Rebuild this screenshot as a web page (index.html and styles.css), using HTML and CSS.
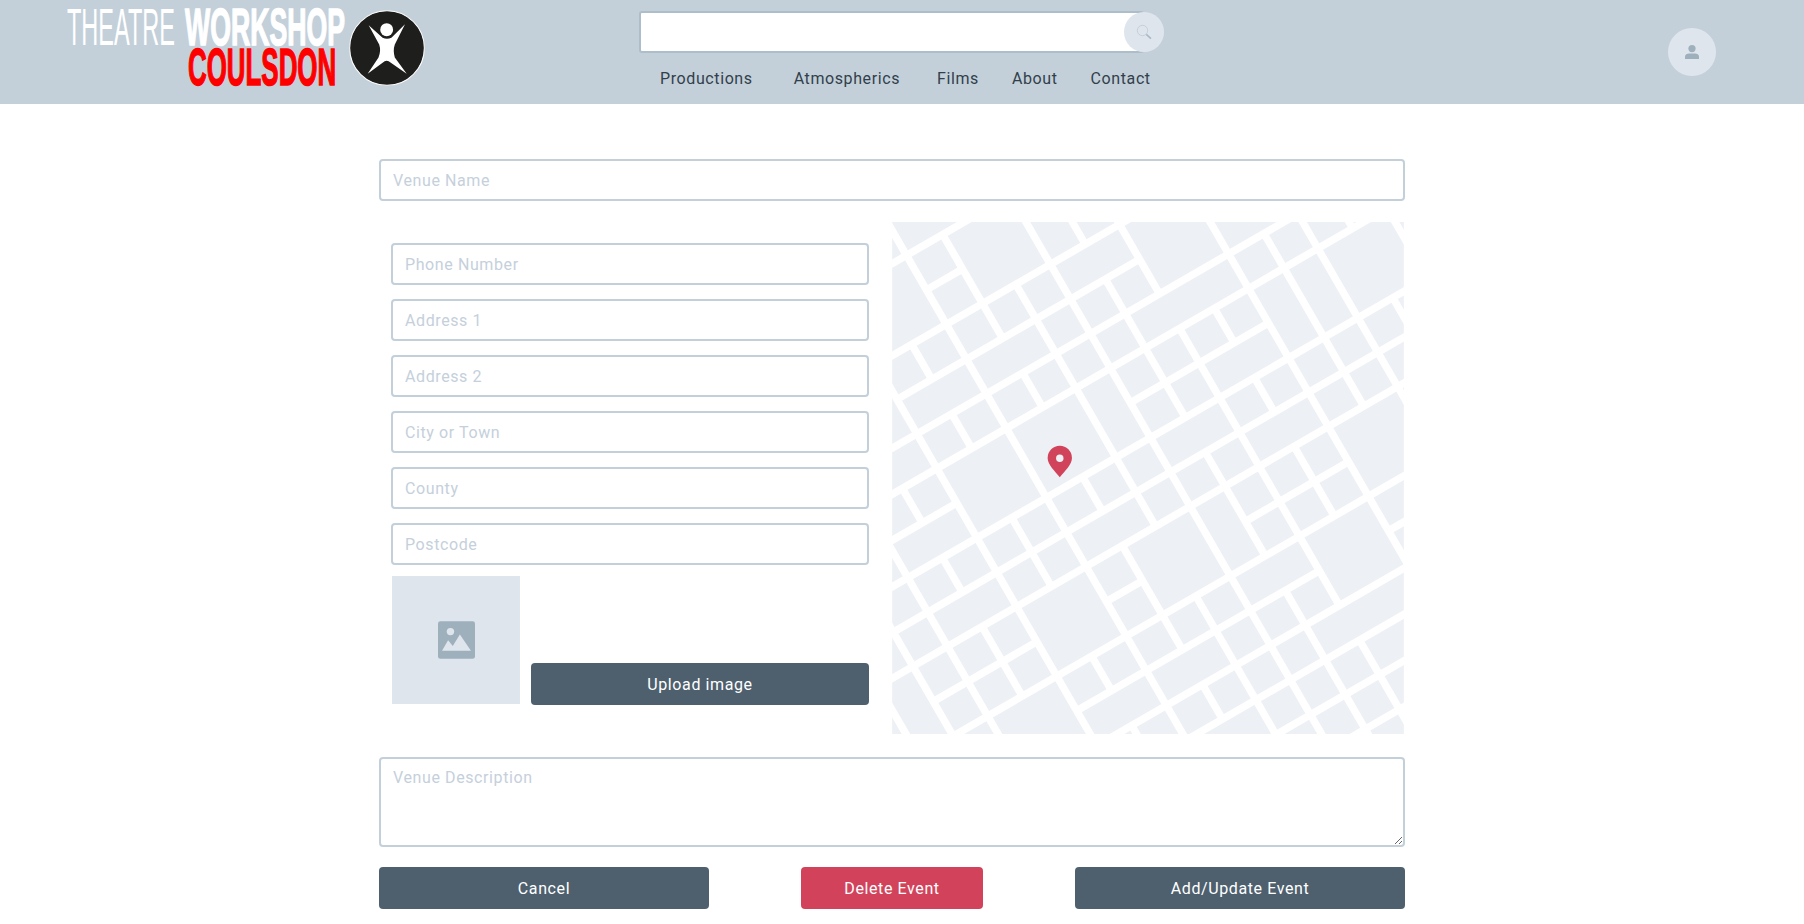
FILE: index.html
```html
<!DOCTYPE html>
<html lang="en">
<head>
<meta charset="utf-8">
<title>Theatre Workshop Coulsdon</title>
<link rel="stylesheet" href="styles.css">
</head>
<body>
<header class="topbar">
  <a class="logo">
    <div class="logo-text">
      <div class="logo-line"><span class="word word-theatre">THEATRE</span><span class="word word-workshop">WORKSHOP</span></div>
      <div class="logo-line logo-line-red"><span class="word word-coulsdon">COULSDON</span></div>
    </div>
    <svg class="logo-mark" viewBox="1049 30 224 224">
      <circle cx="1161" cy="142" r="110" fill="#1e1e1c" stroke="#fff" stroke-width="3"/>
      <circle cx="1160" cy="88" r="19" fill="#fff"/>
      <path d="M1107 75L1148 112Q1161 118 1174 112L1214 72L1184 132Q1178 150 1184 170L1219 218L1166 181Q1160 178 1154 181L1104 218L1136 170Q1144 150 1138 132Z" fill="#fff"/>
    </svg>
  </a>
  <div class="center">
    <div class="search">
      <input class="search-input" type="text">
      <span class="search-btn">
        <svg viewBox="0 0 16 16" width="16" height="16"><circle cx="6.5" cy="6.5" r="5.2" fill="none" stroke="#c5d0db" stroke-width="1"/><path d="M10.3 10.3L15 14.6" stroke="#aab8c5" stroke-width="1.6"/></svg>
      </span>
    </div>
    <nav class="nav">
      <a class="nav-link nav-link-wide">Productions</a>
      <a class="nav-link nav-link-mid">Atmospherics</a>
      <a class="nav-link">Films</a>
      <a class="nav-link">About</a>
      <a class="nav-link">Contact</a>
    </nav>
  </div>
  <span class="avatar">
    <svg viewBox="0 0 16 16" width="16" height="16"><circle cx="8" cy="4.6" r="3.6" fill="#9fb0bd"/><path d="M1 15v-2.4C1 10.6 3 9.6 5 9.6h6c2 0 4 1 4 3V15z" fill="#9fb0bd"/></svg>
  </span>
</header>

<main class="form">
  <input class="field" type="text" placeholder="Venue Name">
  <div class="middle">
    <div class="details">
      <input class="field" type="text" placeholder="Phone Number">
      <input class="field" type="text" placeholder="Address 1">
      <input class="field" type="text" placeholder="Address 2">
      <input class="field" type="text" placeholder="City or Town">
      <input class="field" type="text" placeholder="County">
      <input class="field" type="text" placeholder="Postcode">
      <div class="upload-row">
        <div class="image-box">
          <svg viewBox="203 184 110 112" width="37" height="38">
            <rect x="203" y="184" width="110" height="112" rx="7" fill="#9fb0bd"/>
            <circle cx="240" cy="215" r="11" fill="#dfe5ed"/>
            <path d="M215 272L233 241L247 258L268 224L301 272Z" fill="#dfe5ed"/>
          </svg>
        </div>
        <button class="btn btn-upload" type="button">Upload image</button>
      </div>
    </div>
    <svg class="map" viewBox="36 20 1514 1515">
      <rect x="36" y="20" width="1514" height="1515" fill="#edf0f4"/>
      <g transform="matrix(.866 -.5 .5 .866 0 0)" fill="none" stroke="#fff" stroke-width="22">
        <path d="M-1000 142H2400M8.5 260H132M-1000 378H2400M-229 497H601M-1000 615H2400M-1000 733H2400M-1000 851H-229M364 851H836M-1000 970H2400M-1000 1088H2400M-1000 1205H2400M-583 1325H-229M8.5 1325H132M483 1325H836M-1000 1443H2400M-229 1561H600M836 1561H2400M-1000 1680H2400M-1000 1798H2400M-1000 1917H2400M-1000 2035H2400"/>
        <path d="M-701 -200V2800M-583 -200V2800M-465 -200V2800M-229 -200V2800M8.5 -200V2800M364 -200V2800M836 -200V2800M1073 -200V2800M1310 -200V2800"/>
        <path d="M-347 733V851M-347 970V1088M-347 1205V1443M-110 378V497M-110 615V733M-110 970V1205M-110 1443V1561M-110 1680V1730M132 142V497M132 615V733M132 970V1088M132 1205V1561M132 1680V1798M246 378V1205M246 1443V2800M483 -200V378M483 497V970M483 1088V1443M483 1561V2800M600 -200V615M600 733V1680M600 1798V2800M719 733V851M719 970V1088M719 1205V1443M957 615V1205M1192 -200V733M1192 970V1088"/>
      </g>
      <path d="M532 775C518 757 496 738 496 718A36 36 0 0 1 568 718C568 738 546 757 532 775Z" fill="#d1435b"/>
      <circle cx="532" cy="719" r="11" fill="#edf0f4"/>
    </svg>
  </div>
  <textarea class="field field-area" placeholder="Venue Description"></textarea>
  <div class="actions">
    <button class="btn btn-side" type="button">Cancel</button>
    <button class="btn btn-danger" type="button">Delete Event</button>
    <button class="btn btn-side" type="button">Add/Update Event</button>
  </div>
</main>
</body>
</html>
```

FILE: styles.css
```css
* { box-sizing: border-box; }

html, body { margin: 0; padding: 0; background: #fff; }

body {
  font-family: Roboto, "Liberation Sans", sans-serif;
  font-size: 16px;
  letter-spacing: .6px;
  color: #323f4b;
  overflow: hidden;
  height: 924px;
}

.topbar {
  display: flex;
  height: 104px;
  background: #c3d0da;
}

.logo {
  display: flex;
  width: 639px;
  padding: 8px 0 0 67px;
}

.logo-text {
  width: 283px;
  font-family: "Liberation Sans", sans-serif;
  letter-spacing: 0;
  line-height: 38px;
}

.logo-line { display: flex; height: 38px; white-space: nowrap; }

.logo-line-red { margin-top: 2px; padding-left: 121px; }

.word {
  display: block;
  font-size: 52px;
  transform-origin: 0 50%;
  color: #fff;
}

.word-theatre { width: 118px; transform: scale(.452, 1); }

.word-workshop {
  font-weight: 700;
  transform: scale(.513, 1);
  -webkit-text-stroke: 1.5px #fff;
}

.word-coulsdon {
  font-weight: 700;
  color: #f00;
  transform: scale(.498, 1);
  -webkit-text-stroke: 1.5px #f00;
}

.logo-mark {
  width: 76px;
  height: 76px;
  flex: none;
  margin: 2px 0 0 -1px;
}

.center { width: 525px; padding-top: 11px; }

.search { display: flex; align-items: center; height: 42px; }

.search-input {
  width: 505px;
  height: 42px;
  border: 2px solid #aebdca;
  border-radius: 3px;
  background: #fff;
  flex: none;
}

.search-btn {
  display: flex;
  align-items: center;
  justify-content: center;
  width: 40px;
  height: 40px;
  margin-left: -20px;
  flex: none;
  border-radius: 50%;
  background: #dfe5ed;
}

.nav {
  display: flex;
  gap: 33px;
  padding: 16px 0 0 21px;
  line-height: 20px;
  white-space: nowrap;
}

.nav-link-wide { margin-right: 8px; }
.nav-link-mid { margin-right: 4px; }

.avatar {
  display: flex;
  align-items: center;
  justify-content: center;
  width: 48px;
  height: 48px;
  margin: 28px 88px 0 auto;
  border-radius: 50%;
  background: #dfe5ed;
}

.form {
  width: 1026px;
  margin-left: 379px;
  padding-top: 55px;
}

.field {
  display: block;
  width: 100%;
  height: 42px;
  padding: 0 12px;
  border: 2px solid #c3d0da;
  border-radius: 4px;
  background: #fff;
  font: inherit;
  letter-spacing: inherit;
  color: #323f4b;
  outline: none;
}

.field::placeholder { color: #c5d0db; opacity: 1; }

.middle {
  display: flex;
  margin-top: 21px;
}

.details {
  display: flex;
  flex-direction: column;
  gap: 14px;
  width: 513px;
  padding: 21px 23px 0 12px;
}

.upload-row {
  display: flex;
  align-items: flex-end;
  gap: 11px;
  margin-top: -3px;
}

.image-box {
  display: flex;
  align-items: center;
  justify-content: center;
  width: 128px;
  height: 128px;
  margin: 0 0 1px 1px;
  background: #dfe5ed;
}

.map {
  display: block;
  flex: none;
  width: 512px;
  height: 512px;
}

.field-area {
  height: 90px;
  margin-top: 23px;
  padding-top: 9px;
  line-height: 20px;
}

.actions {
  display: flex;
  justify-content: space-between;
  margin-top: 20px;
}

.btn {
  height: 42px;
  border: 0;
  border-radius: 4px;
  background: #4e5f6e;
  color: #fff;
  font: inherit;
  letter-spacing: inherit;
}

.btn-upload { flex: 1; }
.btn-side { width: 330px; }
.btn-danger { width: 182px; background: #d2435b; }
```
